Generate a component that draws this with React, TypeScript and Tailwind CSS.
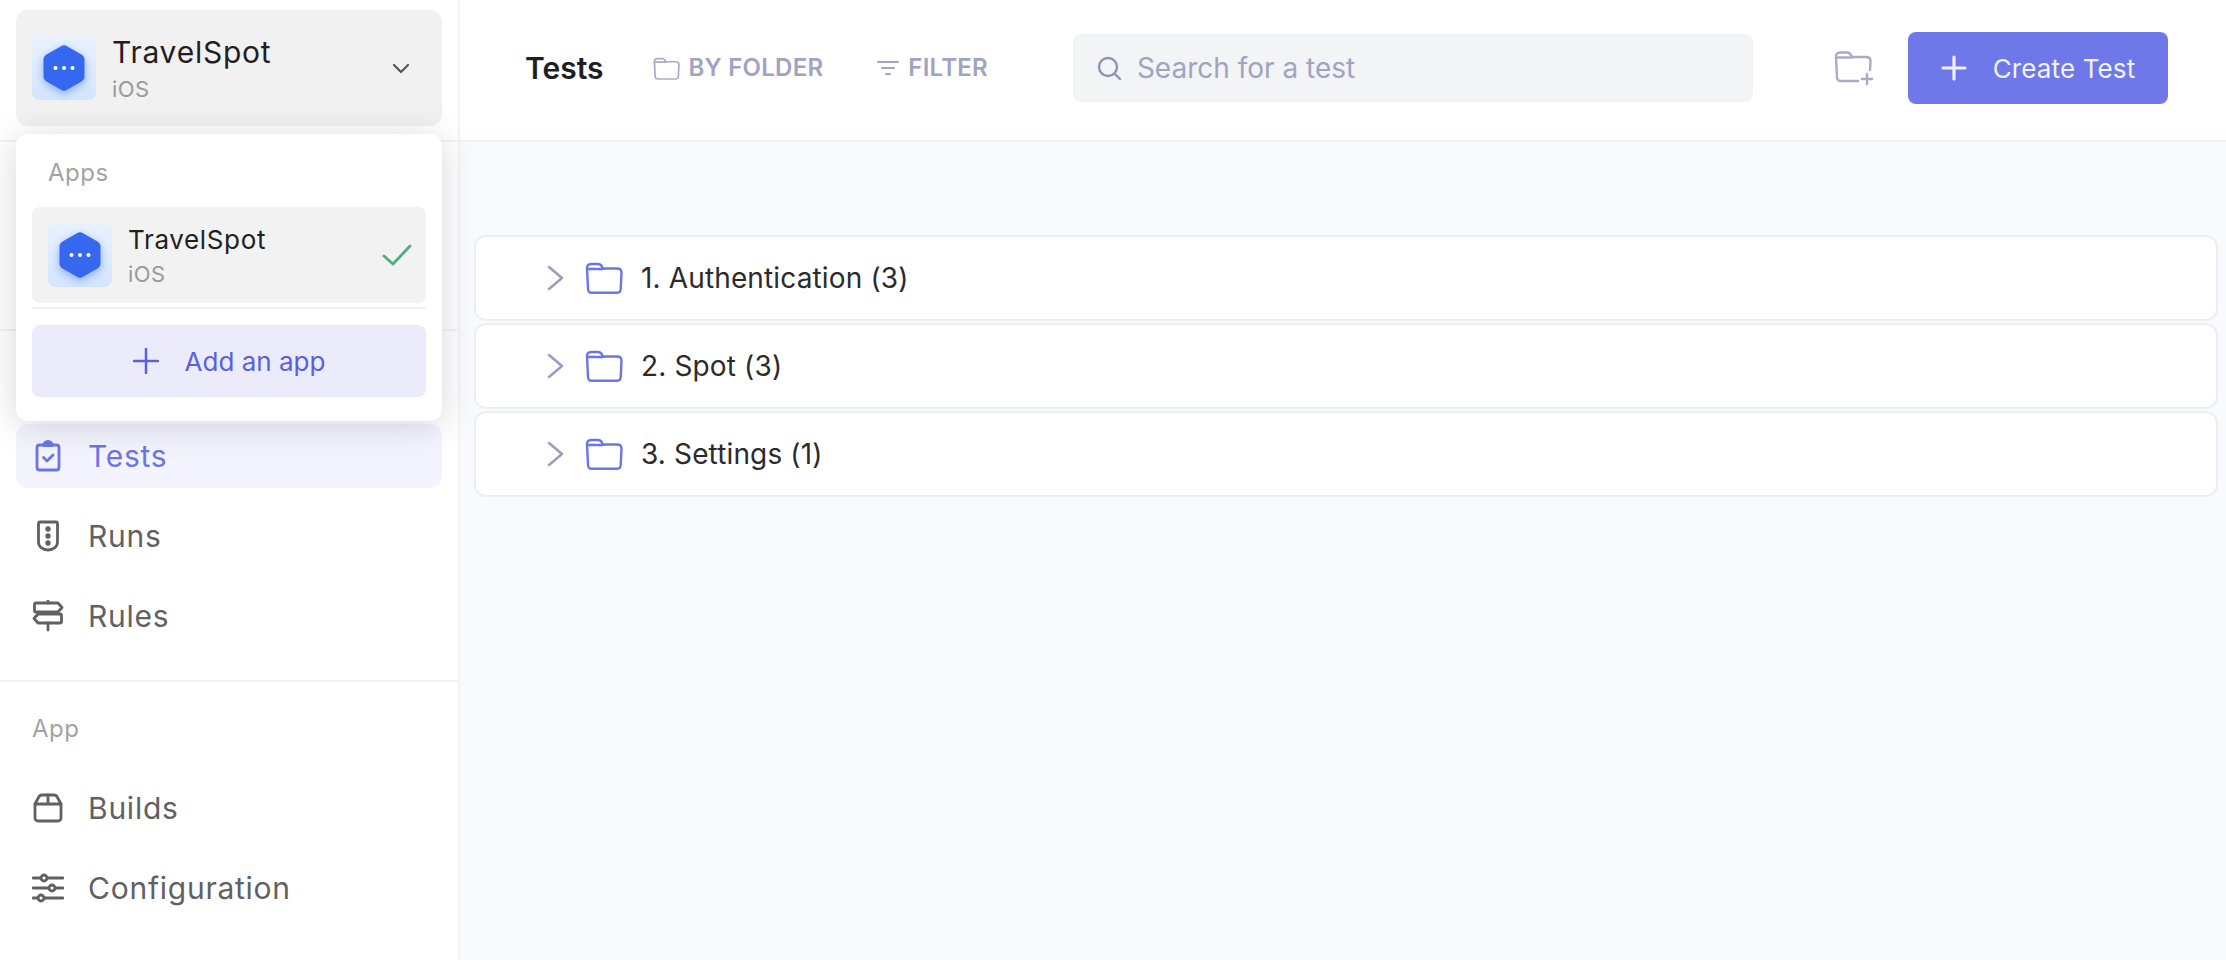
import { ReactNode } from 'react';

// icons
function Hexagon() {
    return (
        <div className="flex h-16 w-16 shrink-0 items-center justify-center rounded-lg bg-gradient-to-b from-[#e8f2fe] to-[#d3e5fd]">
            <svg width="44" height="48" viewBox="0 0 44 48" className="drop-shadow-[0_3px_4px_rgba(51,102,238,0.45)]">
                <path
                    d="M19 2.2a6 6 0 0 1 6 0l14.5 8.4a6 6 0 0 1 3 5.2v16.4a6 6 0 0 1-3 5.2L25 45.8a6 6 0 0 1-6 0L4.500 37.400a6 6 0 0 1-3-5.200V15.800a6 6 0 0 1 3-5.200z"
                    fill="#3568ee"
                />
                <circle cx="13.500" cy="24" r="2" fill="#fff" />
                <circle cx="22" cy="24" r="2" fill="#fff" />
                <circle cx="30.500" cy="24" r="2" fill="#fff" />
            </svg>
        </div>
    );
}

function NavIcon({ children }: { children: ReactNode }) {
    return (
        <svg width="32" height="32" viewBox="0 0 32 32" fill="none" stroke="currentColor" strokeWidth="2.800" strokeLinecap="round" strokeLinejoin="round" className="shrink-0">
            {children}
        </svg>
    );
}

function FolderIcon({ className, stroke, width, height }: { className?: string; stroke: string; width: number; height: number }) {
    return (
        <svg width={width} height={height} viewBox="0 0 38 32" fill="none" stroke={stroke} strokeWidth="2.400" strokeLinecap="round" strokeLinejoin="round" className={className}>
            <path d="M2 6.500C2 3.500 3.500 2 6 2h7c2 0 3 .8 4 2.500L18 6.500h14c2.800 0 4.500 1.500 4.500 4l-.8 16.500c-.1 2.500-1.500 3.800-4 3.800H7c-2.500 0-3.900-1.300-4-3.800z" />
            <path d="M2 7h16" />
        </svg>
    );
}

function NavItem({ icon, label, active }: { icon: ReactNode; label: string; active?: boolean }) {
    return (
        <div className={`flex h-16 items-center gap-6 rounded-xl pl-4 text-[30px] tracking-[0.025em] ${active ? 'bg-[#f3f4fd] text-[#6c75e6]' : 'text-[#616161]'}`}>
            {icon}
            <span>{label}</span>
        </div>
    );
}

function FolderRow({ title, count }: { title: string; count: number }) {
    return (
        <div className="flex h-[86px] items-center rounded-xl border-2 border-[#eceef4] bg-white pl-[71px]">
            <svg width="18" height="26" viewBox="0 0 18 26" fill="none" stroke="#989cc0" strokeWidth="2.500" strokeLinecap="round" strokeLinejoin="round" className="shrink-0">
                <path d="M2 2l13 11L2 24" />
            </svg>
            <FolderIcon stroke="#6c75e6" width={38} height={32} className="ml-5 shrink-0" />
            <span className="ml-[18px] text-[28px] tracking-[0.005em] text-[#2b2b2b]">
                {title} ({count})
            </span>
        </div>
    );
}

export default function App() {
    return (
        <div className="flex h-screen w-full overflow-hidden bg-[#f9fafe] font-['Inter',sans-serif]">
            {/* Sidebar */}
            <aside className="relative w-[460px] shrink-0 border-r-2 border-[#f2f3f7] bg-white">
                <div className="h-[142px] border-b-2 border-[#f3f3f5] px-4 pt-[10px]">
                    <div className="flex h-[116px] items-center rounded-xl bg-[#f1f1f1] pr-8 pl-4">
                        <Hexagon />
                        <div className="ml-4 flex-1">
                            <div className="text-[30px] leading-9 tracking-[0.025em] text-[#1f1f1f]">TravelSpot</div>
                            <div className="mt-[6px] text-[22px] leading-[26px] tracking-[0.02em] text-[#9a9a9a]">iOS</div>
                        </div>
                        <svg width="18" height="12" viewBox="0 0 18 12" fill="none" stroke="#555" strokeWidth="2.200" strokeLinecap="round" strokeLinejoin="round" className="mt-[2px]">
                            <path d="M2 2l7 7 7-7" />
                        </svg>
                    </div>
                </div>
                <div className="h-[189px] border-b-2 border-[#f3f3f5]" />
                <nav className="flex flex-col gap-4 border-b-2 border-[#f3f3f5] px-4 pt-[93px] pb-8">
                    <NavItem
                        active
                        label="Tests"
                        icon={
                            <NavIcon>
                                <rect x="5" y="5" width="22" height="25" rx="2.500" />
                                <path d="M11.500 5.500a4.500 4 0 0 1 9 0z" fill="currentColor" />
                                <path d="M11.500 17.500l3.500 3.500 6-6" />
                            </NavIcon>
                        }
                    />
                    <NavItem
                        label="Runs"
                        icon={
                            <NavIcon>
                                <path d="M8 2h16c1 0 1.500.5 1.500 1.500V22c0 4.500-4 8-9.500 8s-9.500-3.500-9.500-8V3.500C6.500 2.500 7 2 8 2z" />
                                <circle cx="16" cy="9" r="2.700" fill="currentColor" stroke="none" />
                                <circle cx="16" cy="16" r="2.700" fill="currentColor" stroke="none" />
                                <circle cx="16" cy="23" r="2.700" fill="currentColor" stroke="none" />
                            </NavIcon>
                        }
                    />
                    <NavItem
                        label="Rules"
                        icon={
                            <NavIcon>
                                <path d="M16 1v2M16 23v7" />
                                <path d="M4 3h22l4 4.500-4 4.500H4c-1 0-1.500-.5-1.500-1.500v-6C2.500 3.500 3 3 4 3z" />
                                <path d="M28 14H6l-4 4.500L6 23h22c1 0 1.500-.5 1.500-1.500v-6c0-1-.5-1.500-1.500-1.500z" />
                            </NavIcon>
                        }
                    />
                </nav>
                <div className="flex flex-col gap-4 px-4 pt-[33px]">
                    <div className="mb-[17px] pl-4 text-2xl leading-7 tracking-[0.02em] text-[#a3a3a3]">App</div>
                    <NavItem
                        label="Builds"
                        icon={
                            <NavIcon>
                                <path d="M3 12v14a3 3 0 0 0 3 3h20a3 3 0 0 0 3-3V12l-3.500-6.500C24.700 3.800 23.500 3 22 3H10c-1.500 0-2.700.8-3.500 2.500z" />
                                <path d="M3 12h26M16 3v9" />
                            </NavIcon>
                        }
                    />
                    <NavItem
                        label="Configuration"
                        icon={
                            <NavIcon>
                                <path d="M1 6h8M15 6h16M1 16h15M23 16h8M1 26h5M12 26h19" />
                                <circle cx="12" cy="6" r="3" />
                                <circle cx="20" cy="16" r="3" />
                                <circle cx="9" cy="26" r="3" />
                            </NavIcon>
                        }
                    />
                </div>

                {/* App switcher dropdown */}
                <div className="absolute top-[134px] left-4 h-[287px] w-[426px] rounded-xl bg-white px-4 pt-[25px] shadow-[0_4px_36px_rgba(0,0,40,0.16)]">
                    <div className="pl-4 text-2xl leading-7 tracking-[0.02em] text-[#a3a3a3]">Apps</div>
                    <div className="mt-5 flex h-24 items-center rounded-lg bg-[#f2f2f2] pr-[14px] pl-4">
                        <Hexagon />
                        <div className="ml-4 flex-1">
                            <div className="text-[26px] leading-8 tracking-[0.025em] text-[#1f1f1f]">TravelSpot</div>
                            <div className="mt-[5px] text-[22px] leading-[26px] tracking-[0.02em] text-[#9a9a9a]">iOS</div>
                        </div>
                        <svg width="30" height="24" viewBox="0 0 30 24" fill="none" stroke="#4caf7b" strokeWidth="2.800" strokeLinecap="round" strokeLinejoin="round">
                            <path d="M2 13l9 8L28 3" />
                        </svg>
                    </div>
                    <div className="mt-1 h-[2px] bg-[#f3f3f5]" />
                    <div className="mt-4 flex h-[72px] items-center justify-center gap-[26px] rounded-lg bg-[#ecebfc] text-[26px] text-[#5a5fdc]">
                        <svg width="26" height="26" viewBox="0 0 26 26" fill="none" stroke="#5a5fdc" strokeWidth="2.500" strokeLinecap="round">
                            <path d="M13 1v24M1 13h24" />
                        </svg>
                        <span>Add an app</span>
                    </div>
                </div>
            </aside>

            {/* Main */}
            <main className="flex min-w-0 flex-1 flex-col">
                <header className="flex h-[142px] shrink-0 items-center border-b-2 border-[#f1f2f7] bg-white pr-[58px] pb-1 pl-[65px]">
                    <h1 className="text-[30px] font-semibold text-[#1f1f1f]">Tests</h1>
                    <div className="ml-[49px] flex items-center gap-[9px] text-2xl font-semibold tracking-[0.01em] text-[#a0a3c2]">
                        <FolderIcon stroke="#a9acc9" width={27} height={23} />
                        <span>BY FOLDER</span>
                    </div>
                    <div className="ml-[54px] flex items-center gap-[9px] text-2xl font-semibold tracking-[0.01em] text-[#a0a3c2]">
                        <svg width="22" height="16" viewBox="0 0 22 16" fill="none" stroke="#a0a3c2" strokeWidth="2" strokeLinecap="round">
                            <path d="M1 2h20M5 8h12M9 14h4" />
                        </svg>
                        <span>FILTER</span>
                    </div>
                    <div className="ml-[85px] flex h-[68px] w-[680px] items-center gap-[15px] rounded-lg bg-[#f3f4f6] pl-[23px] text-[28px] text-[#a0a3c2]">
                        <svg width="26" height="26" viewBox="0 0 26 26" fill="none" stroke="#8f93b5" strokeWidth="2.400" strokeLinecap="round">
                            <circle cx="12" cy="12" r="9" />
                            <path d="M19 19l5 5" />
                        </svg>
                        <span>Search for a test</span>
                    </div>
                    <svg width="42" height="36" viewBox="0 0 42 36" fill="none" stroke="#a9acc4" strokeWidth="2.400" strokeLinecap="round" strokeLinejoin="round" className="ml-auto">
                        <path d="M24 31H7c-2.500 0-3.900-1.300-4-3.800L2 7c0-3 1.500-4.500 4-4.500h7c2 0 3 .8 4 2.500l1 2h14c2.800 0 4.500 1.500 4.500 4L36 20" />
                        <path d="M2 7.500h16" />
                        <path d="M33 24v10M28 29h10" />
                    </svg>
                    <button className="ml-8 flex h-[72px] w-[260px] items-center justify-center gap-[26px] rounded-lg bg-[#6e78e8] text-[26px] tracking-[0.005em] text-[#f1f2fd]">
                        <svg width="26" height="26" viewBox="0 0 26 26" fill="none" stroke="#f1f2fd" strokeWidth="3.200" strokeLinecap="round">
                            <path d="M13 2v22M2 13h22" />
                        </svg>
                        <span>Create Test</span>
                    </button>
                </header>
                <div className="flex flex-col gap-[2px] pt-[93px] pr-2 pl-[14px]">
                    <FolderRow title="1. Authentication" count={3} />
                    <FolderRow title="2. Spot" count={3} />
                    <FolderRow title="3. Settings" count={1} />
                </div>
            </main>
        </div>
    );
}
